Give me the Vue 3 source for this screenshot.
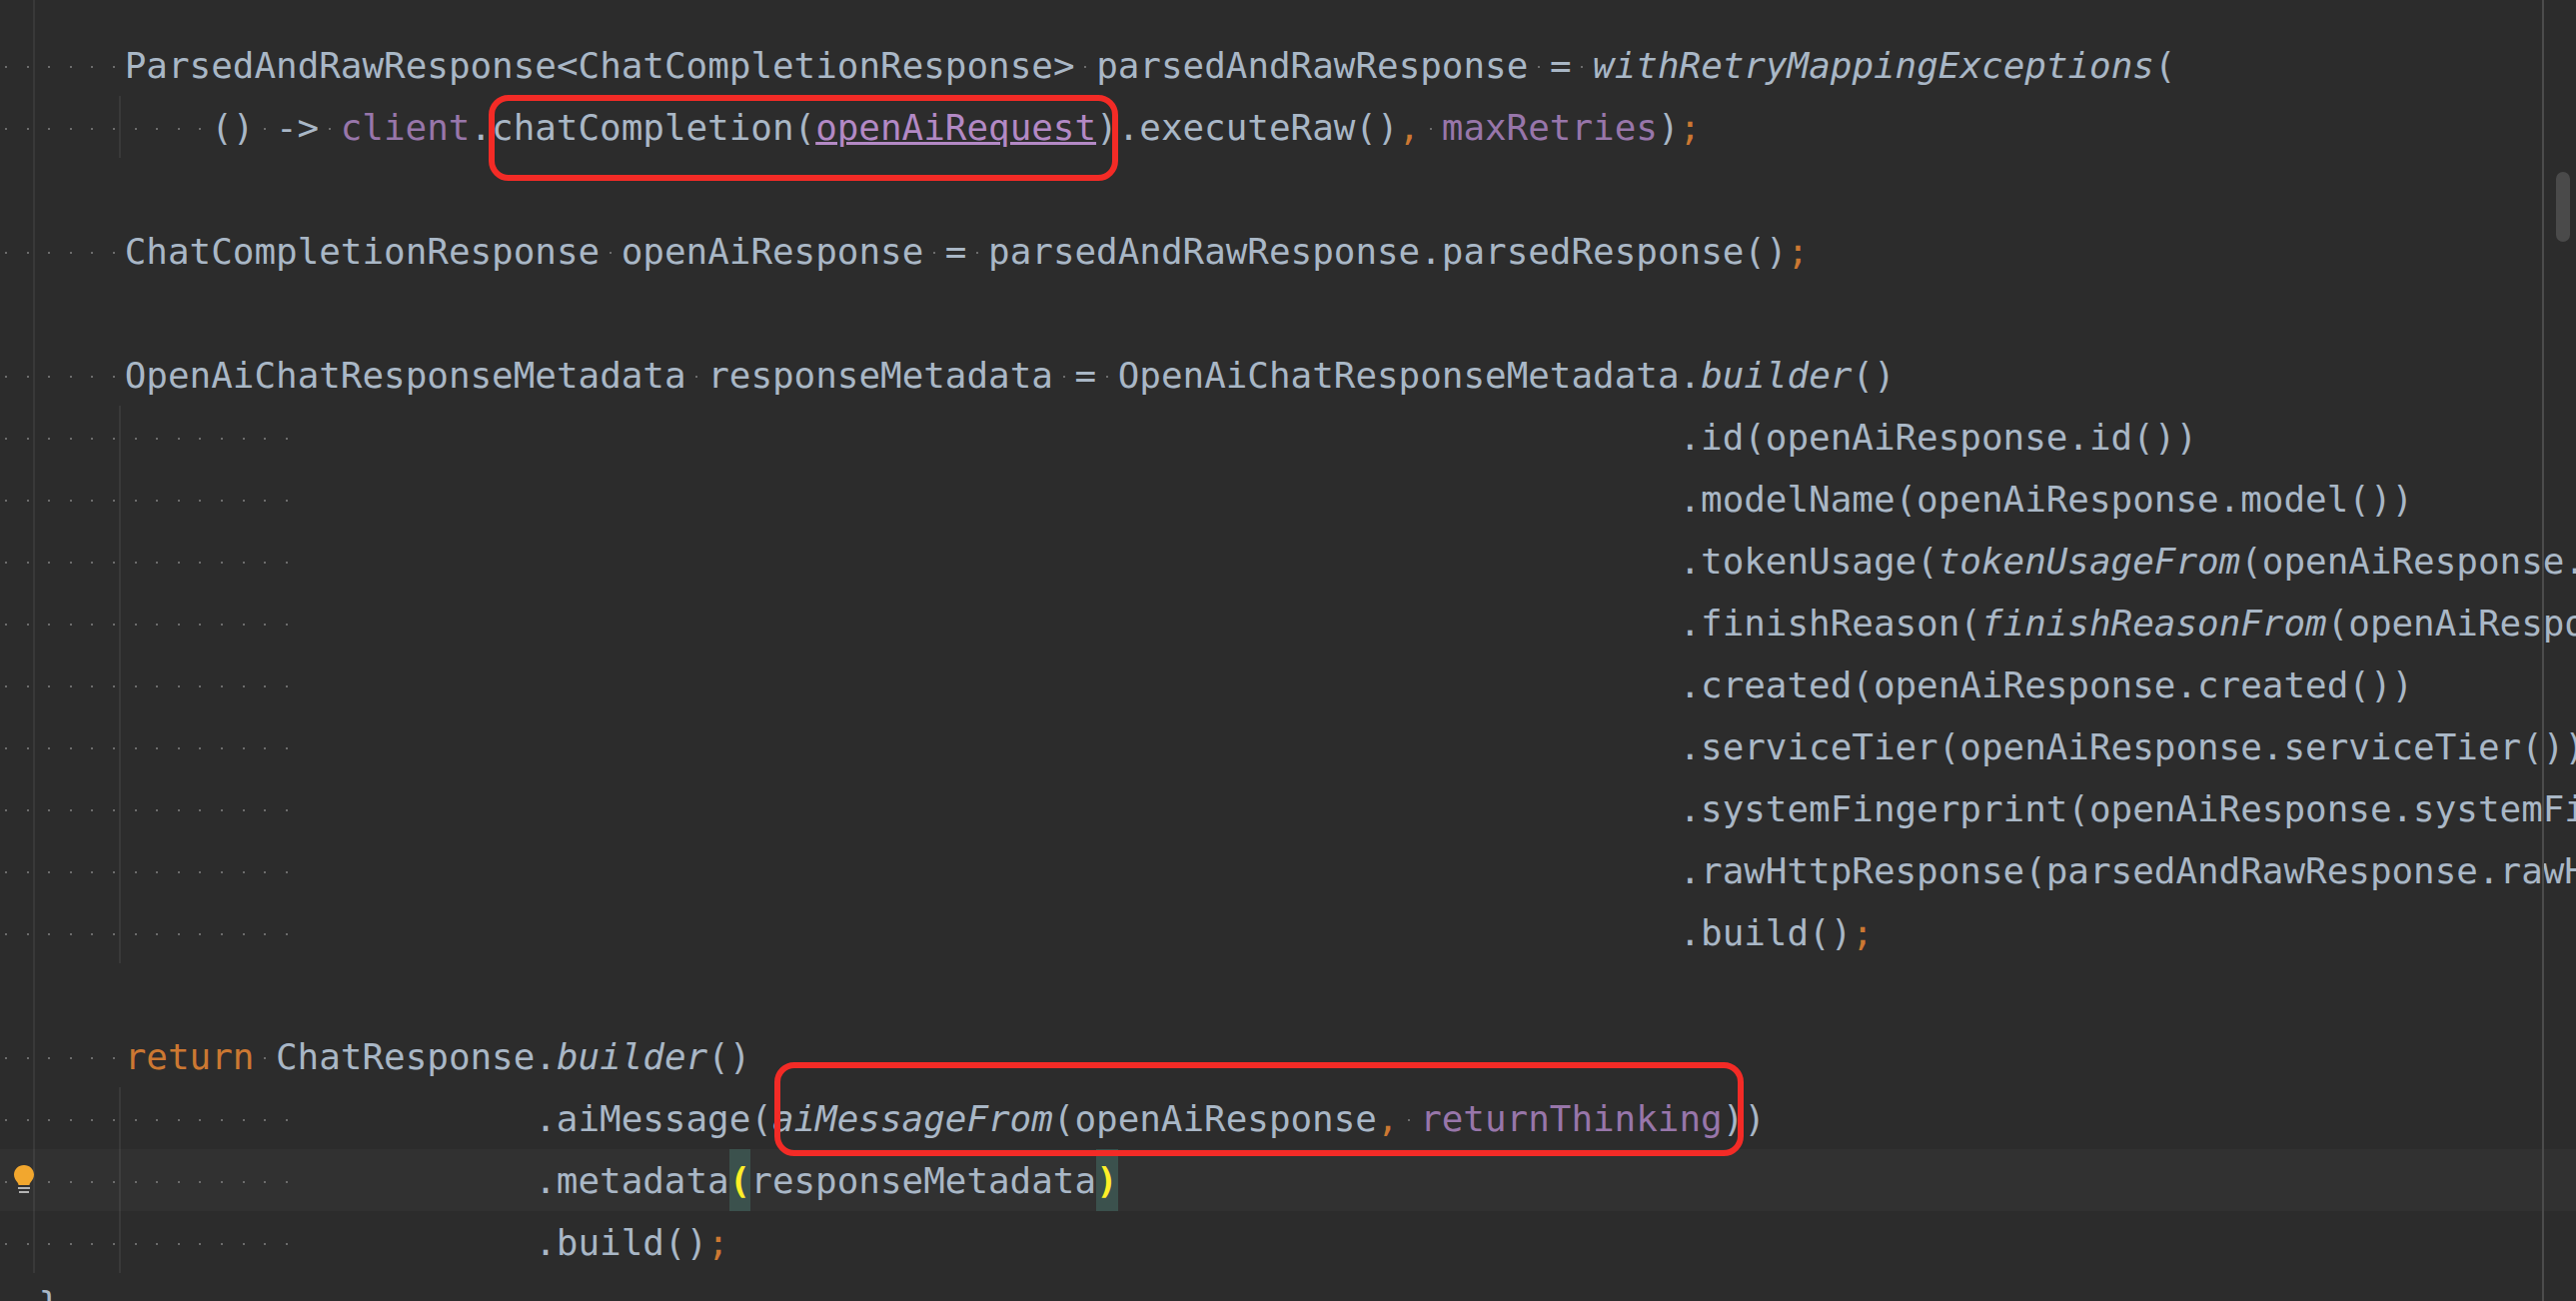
<script setup>
const raw = [
  [['', '      ParsedAndRawResponse<ChatCompletionResponse> parsedAndRawResponse = '], ['i', 'withRetryMappingExceptions'], ['', '(']],
  { g: true, t: [['', '          () -> '], ['p', 'client'], ['', '.chatCompletion('], ['u', 'openAiRequest'], ['', ').executeRaw()'], ['o', ','], ['', ' '], ['p', 'maxRetries'], ['', ')'], ['o', ';']] },
  [],
  [['', '      ChatCompletionResponse openAiResponse = parsedAndRawResponse.parsedResponse()'], ['o', ';']],
  [],
  [['', '      OpenAiChatResponseMetadata responseMetadata = OpenAiChatResponseMetadata.'], ['i', 'builder'], ['', '()']],
  { g: true, gap: 64, t: [['', '.id(openAiResponse.id())']] },
  { g: true, gap: 64, t: [['', '.modelName(openAiResponse.model())']] },
  { g: true, gap: 64, t: [['', '.tokenUsage('], ['i', 'tokenUsageFrom'], ['', '(openAiResponse.']] },
  { g: true, gap: 64, t: [['', '.finishReason('], ['i', 'finishReasonFrom'], ['', '(openAiRespo']] },
  { g: true, gap: 64, t: [['', '.created(openAiResponse.created())']] },
  { g: true, gap: 64, t: [['', '.serviceTier(openAiResponse.serviceTier())']] },
  { g: true, gap: 64, t: [['', '.systemFingerprint(openAiResponse.systemFi']] },
  { g: true, gap: 64, t: [['', '.rawHttpResponse(parsedAndRawResponse.rawH']] },
  { g: true, gap: 64, t: [['', '.build()'], ['o', ';']] },
  [],
  [['', '      '], ['o', 'return'], ['', ' ChatResponse.'], ['i', 'builder'], ['', '()']],
  { g: true, gap: 11, t: [['', '.aiMessage('], ['i', 'aiMessageFrom'], ['', '(openAiResponse'], ['o', ','], ['', ' '], ['p', 'returnThinking'], ['', '))']] },
  { g: true, gap: 11, cur: true, t: [['', '.metadata'], ['b', '('], ['', 'responseMetadata'], ['b', ')']] },
  { g: true, gap: 11, t: [['', '.build()'], ['o', ';']] },
  { plain: true, t: [['', '  }']] },
]

function splitToken([cls, text]) {
  return text.split(/( )/).filter(Boolean).map((s) => ({ cls, text: s, ws: s === ' ' }))
}

const rows = raw.map((r) => {
  const o = Array.isArray(r) ? { t: r } : r
  const parts = o.plain
    ? o.t.map(([cls, text]) => ({ cls, text, ws: false }))
    : o.t.flatMap(splitToken)
  const lead = o.gap ? Array.from({ length: 14 }, () => ({ cls: '', text: ' ', ws: true })) : []
  return { g: !!o.g, cur: !!o.cur, gap: o.gap || 0, lead, parts }
})
</script>

<template>
  <div class="editor">
    <div class="code">
      <div
        v-for="(row, i) in rows"
        :key="i"
        class="row"
        :class="{ guide: row.g, current: row.cur }"
      >
        <svg v-if="row.cur" class="bulb" viewBox="0 0 20 28" width="20" height="28">
          <path d="M10 0C4.4 0 0 4.2 0 9.6c0 3.4 1.7 5.6 3.2 7.4.8 1 1.2 1.7 1.3 3h11c.1-1.3.5-2 1.3-3C18.300 15.200 20 13 20 9.600 20 4.200 15.600 0 10 0z" fill="#f2a72e" />
          <rect x="4" y="22" width="12" height="2" fill="#b4b4b4" />
          <rect x="5" y="26" width="10" height="2" fill="#b4b4b4" />
        </svg>
        <span v-for="(d, k) in row.lead" :key="'l' + k" class="ws"></span>
        <span v-if="row.gap" class="gap" :style="{ width: row.gap + 'ch' }"></span>
        <template v-for="(p, k) in row.parts" :key="k">
          <span v-if="p.ws" class="ws"></span>
          <span v-else :class="p.cls">{{ p.text }}</span>
        </template>
      </div>
    </div>

    <div class="margin-line"></div>
    <div class="thumb"></div>
    <div class="mark mark-call"></div>
    <div class="mark mark-args"></div>
  </div>
</template>

<style>
html, body { background: #2c2c2c; }
</style>

<style scoped>
.editor {
  position: relative;
  width: 2578px;
  height: 1302px;
  overflow: hidden;
  background: linear-gradient(#393939, #393939) 33px 0 / 2px 1274px no-repeat, #2c2c2c;
}
.code {
  margin-left: -4.8px;
  padding-top: 34px;
  font-family: "DejaVu Sans Mono", "Liberation Mono", monospace;
  font-size: 35.9px;
  line-height: 64px;
  color: #a9b7c6;
}
.row {
  position: relative;
  height: 62px;
  white-space: pre;
}
.guide {
  background: linear-gradient(#393939, #393939) 123.3px 0 / 2px 100% no-repeat;
}
.current {
  background: linear-gradient(#3e3e3e, #3e3e3e) 123.3px 0 / 2px 100% no-repeat, rgba(255, 255, 255, 0.026);
}
.ws {
  display: inline-block;
  width: 1ch;
  height: 62px;
  vertical-align: top;
  background: linear-gradient(#6c6c6c, #6c6c6c) center 32px / 2px 2px no-repeat;
}
.gap {
  display: inline-block;
  height: 62px;
  vertical-align: top;
}
.o { color: #cc7832; }
.p { color: #9876aa; }
.i { font-style: italic; }
.u {
  color: #b389c5;
  text-decoration: underline;
  text-decoration-thickness: 3px;
  text-underline-offset: 2px;
}
.b {
  display: inline-block;
  height: 62px;
  vertical-align: top;
  background: #3b514d;
  color: #ffef28;
  font-weight: 700;
}
.bulb {
  position: absolute;
  left: 18.800px;
  top: 16px;
}
.margin-line {
  position: absolute;
  left: 2544px;
  top: 0;
  width: 2px;
  height: 100%;
  background: #4c4c4c;
}
.thumb {
  position: absolute;
  left: 2558px;
  top: 172px;
  width: 14px;
  height: 70px;
  border-radius: 7px;
  background: #4a4a4a;
}
.mark {
  position: absolute;
  box-sizing: border-box;
  border: 6px solid #f32b26;
  border-radius: 20px;
}
.mark-call {
  left: 489px;
  top: 95px;
  width: 630px;
  height: 86px;
}
.mark-args {
  left: 775px;
  top: 1063px;
  width: 970px;
  height: 94px;
}
</style>
